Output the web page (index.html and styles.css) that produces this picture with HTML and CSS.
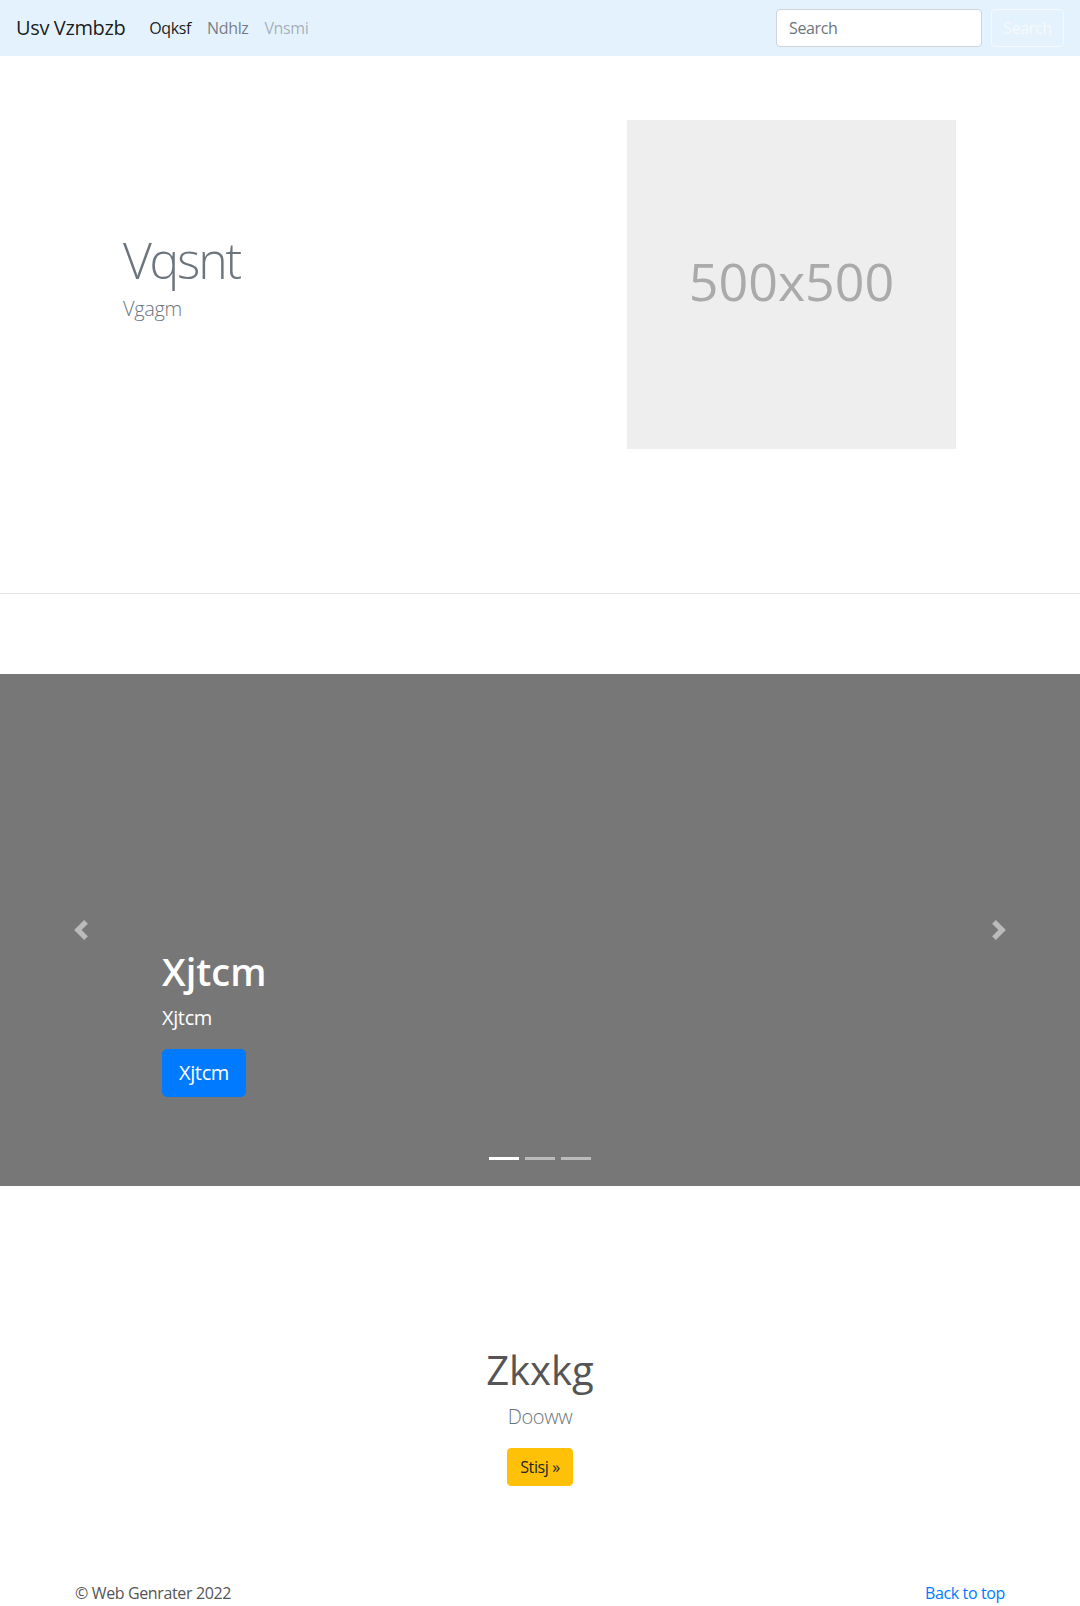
FILE: index.html
```html
<!DOCTYPE html>
<html lang="en">
<head>
<meta charset="utf-8">
<title>Usv Vzmbzb</title>
<link rel="stylesheet" href="styles.css">
</head>
<body>
<nav class="navbar">
  <a class="brand" href="#">Usv Vzmbzb</a>
  <ul class="nav">
    <li><a class="nav-link active" href="#">Oqksf</a></li>
    <li><a class="nav-link" href="#">Ndhlz</a></li>
    <li><a class="nav-link disabled" href="#">Vnsmi</a></li>
  </ul>
  <form class="search">
    <input class="search-input" type="search" placeholder="Search">
    <button class="search-btn" type="button">Search</button>
  </form>
</nav>

<section class="hero">
  <div class="container">
    <div class="hero-row">
      <div class="hero-text">
        <h1 class="display">Vqsnt</h1>
        <p class="lead muted">Vgagm</p>
      </div>
      <div class="hero-media">
        <div class="placeholder">500x500</div>
      </div>
    </div>
  </div>
</section>

<hr class="divider">

<div class="carousel">
  <div class="carousel-item">
    <div class="carousel-caption">
      <h1 class="caption-title">Xjtcm</h1>
      <p class="caption-text">Xjtcm</p>
      <p class="caption-action"><a class="btn btn-primary btn-lg" href="#">Xjtcm</a></p>
    </div>
  </div>
  <a class="carousel-control prev" href="#">
    <svg class="control-icon" viewBox="0 0 8 8" width="20" height="20"><path d="M5.25 0l-4 4 4 4 1.5-1.5L4.25 4l2.5-2.5L5.25 0z" fill="#fff"/></svg>
  </a>
  <a class="carousel-control next" href="#">
    <svg class="control-icon" viewBox="0 0 8 8" width="20" height="20"><path d="M2.75 0l-1.5 1.5L3.75 4l-2.5 2.5L2.75 8l4-4-4-4z" fill="#fff"/></svg>
  </a>
  <ol class="indicators">
    <li class="indicator active"></li>
    <li class="indicator"></li>
    <li class="indicator"></li>
  </ol>
</div>

<section class="feature">
  <h1 class="feature-title">Zkxkg</h1>
  <p class="lead muted">Dooww</p>
  <p class="feature-action"><a class="btn btn-warning" href="#">Stisj &raquo;</a></p>
</section>

<footer class="footer">
  <div class="container footer-row">
    <p class="footer-copy">&copy; Web Genrater 2022</p>
    <a class="footer-link" href="#">Back to top</a>
  </div>
</footer>
</body>
</html>
```

FILE: styles.css
```css
* { box-sizing: border-box; }
html, body { margin: 0; padding: 0; }
body {
  font-family: "Open Sans", "Noto Sans", sans-serif;
  font-size: 16px;
  line-height: 1.5;
  letter-spacing: -0.023em;
  color: #212529;
  background: #fff;
}
a { text-decoration: none; }
h1, p { margin: 0; }

.container {
  width: 960px;
  margin: 0 auto;
  padding: 0 15px;
}

/* navbar */
.navbar {
  display: flex;
  align-items: center;
  height: 56px;
  padding: 8px 16px;
  background: #e3f2fd;
}
.brand {
  font-size: 20px;
  line-height: 30px;
  color: rgba(0,0,0,.9);
  margin-right: 16px;
}
.nav {
  display: flex;
  list-style: none;
  margin: 0;
  padding: 0;
}
.nav-link {
  display: block;
  padding: 8px;
  color: rgba(0,0,0,.5);
}
.nav-link.active { color: rgba(0,0,0,.9); }
.nav-link.disabled { color: rgba(0,0,0,.3); }
.search {
  margin-left: auto;
  display: flex;
  align-items: center;
}
.search-input {
  width: 206px;
  height: 38px;
  padding: 6px 12px;
  font: inherit;
  letter-spacing: inherit;
  color: #495057;
  background: #fff;
  border: 1px solid #ced4da;
  border-radius: 4px;
  margin-right: 9px;
}
.search-input::placeholder { color: #6c757d; }
.search-btn {
  width: 73px;
  height: 38px;
  padding: 6px 0;
  font: inherit;
  letter-spacing: inherit;
  color: #f8f9fa;
  background: transparent;
  border: 1px solid #f8f9fa;
  border-radius: 4px;
}

/* hero */
.hero { padding: 64px 0 128px; }
.hero-row {
  display: grid;
  grid-template-columns: 1fr 1fr;
  column-gap: 30px;
  align-items: center;
}
.hero-text { padding: 0 48px; }
.display {
  font-size: 50px;
  font-weight: 300;
  line-height: 1.2;
  letter-spacing: -0.045em;
  color: #6c757d;
  margin-bottom: 4px;
}
.lead {
  font-size: 20px;
  font-weight: 300;
  line-height: 1.5;
}
.muted { color: #6c757d; }
.hero-text .lead { margin-bottom: 16px; }
.hero-media {
  display: flex;
  justify-content: flex-end;
  padding-right: 49px;
}
.placeholder {
  width: 329px;
  height: 329px;
  padding-bottom: 8px;
  background: #eee;
  color: #aaa;
  font-size: 52px;
  letter-spacing: 0;
  display: flex;
  align-items: center;
  justify-content: center;
}

.divider {
  margin: 16px 0 0;
  border: 0;
  border-top: 1px solid rgba(0,0,0,.1);
}

/* carousel */
.carousel {
  position: relative;
  margin-top: 80px;
  height: 512px;
  background: #777;
}
.carousel-item { height: 100%; }
.carousel-caption {
  position: absolute;
  left: 15%;
  right: 15%;
  bottom: 53px;
  padding: 20px 0;
  color: #fff;
  text-align: left;
}
.caption-title {
  font-size: 38px;
  font-weight: 600;
  line-height: 1.2;
  letter-spacing: 0;
  margin-bottom: 8px;
}
.caption-text {
  font-size: 20px;
  line-height: 30px;
  margin-bottom: 16px;
}
.caption-action { margin-bottom: 16px; }
.btn {
  display: inline-block;
  border: 1px solid transparent;
  border-radius: 4px;
  padding: 6px 12px;
  font-size: 16px;
  line-height: 24px;
  vertical-align: middle;
}
.btn-lg {
  padding: 8px 16px;
  font-size: 20px;
  line-height: 30px;
  border-radius: 5px;
}
.btn-primary { background: #007bff; border-color: #007bff; color: #fff; }
.btn-warning { background: #ffc107; border-color: #ffc107; color: #212529; }

.carousel-control {
  position: absolute;
  top: 0;
  bottom: 0;
  width: 15%;
  display: flex;
  align-items: center;
  justify-content: center;
  opacity: .5;
}
.carousel-control.prev { left: 0; }
.carousel-control.next { right: 0; }
.control-icon { display: block; }

.indicators {
  position: absolute;
  left: 0;
  right: 0;
  bottom: 26px;
  display: flex;
  justify-content: center;
  list-style: none;
  margin: 0;
  padding: 0;
}
.indicator {
  width: 30px;
  height: 3px;
  margin: 0 3px;
  background: #fff;
  opacity: .5;
}
.indicator.active { opacity: 1; }

/* feature */
.feature {
  text-align: center;
  padding: 160px 0 0;
}
.feature-title {
  font-size: 40px;
  font-weight: 500;
  line-height: 1.2;
  letter-spacing: 0;
  color: #555;
  margin-bottom: 8px;
}
.feature .lead { margin-bottom: 16px; }

/* footer */
.footer { padding: 95px 0 0; }
.footer-row {
  display: flex;
  justify-content: space-between;
  align-items: center;
}
.footer-copy { color: #555; }
.footer-link { color: #007bff; }
```
